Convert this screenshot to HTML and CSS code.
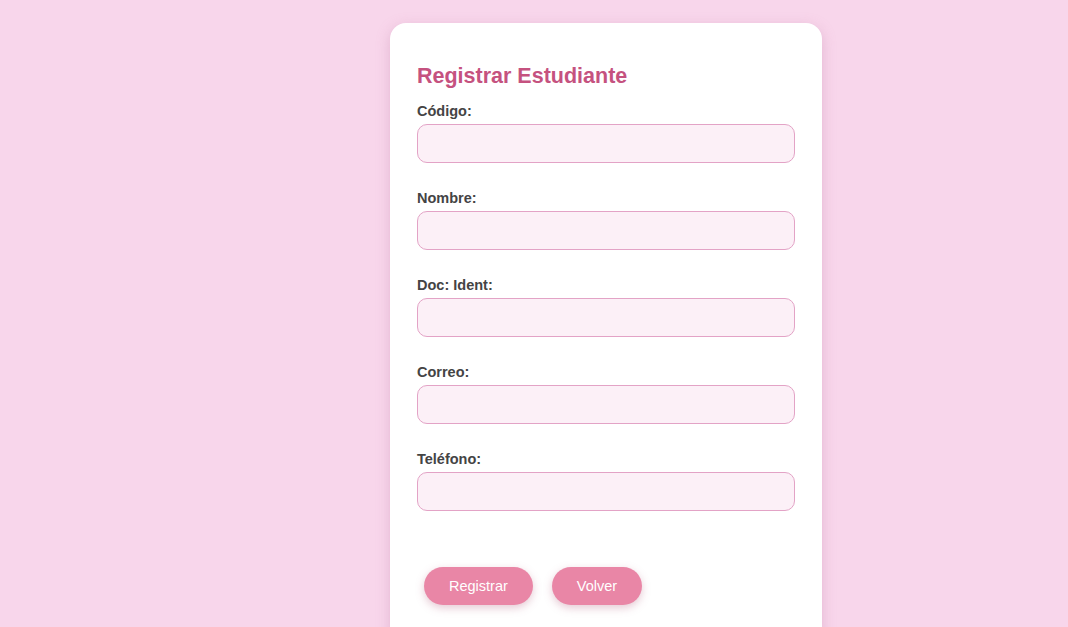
FILE: index.html
```html
<!DOCTYPE html>
<html lang="es">
<head>
<meta charset="utf-8">
<title>Registrar Estudiante</title>
<link rel="stylesheet" href="styles.css">
</head>
<body>
<div class="card">
  <h2 class="title">Registrar Estudiante</h2>
  <form class="form">
    <div class="field">
      <label class="label">Código:</label>
      <input class="input" type="text">
    </div>
    <div class="field">
      <label class="label">Nombre:</label>
      <input class="input" type="text">
    </div>
    <div class="field">
      <label class="label">Doc: Ident:</label>
      <input class="input" type="text">
    </div>
    <div class="field">
      <label class="label">Correo:</label>
      <input class="input" type="text">
    </div>
    <div class="field">
      <label class="label">Teléfono:</label>
      <input class="input" type="text">
    </div>
    <div class="actions">
      <button class="btn" type="button">Registrar</button>
      <button class="btn" type="button">Volver</button>
    </div>
  </form>
</div>
</body>
</html>
```
FILE: styles.css
```css
html, body {
  margin: 0;
  padding: 0;
}
body {
  background: #f8d6eb;
  font-family: "Liberation Sans", Arial, sans-serif;
  padding: 23px 0 0 390px;
  height: 627px;
  box-sizing: border-box;
  overflow: hidden;
}
.card {
  width: 432px;
  box-sizing: border-box;
  background: #ffffff;
  border-radius: 16px;
  padding: 41px 27px 40px;
  box-shadow: 0 4px 14px rgba(190, 120, 160, 0.35);
}
.title {
  margin: 0 0 14px;
  font-size: 21.5px;
  font-weight: bold;
  color: #c5527f;
  line-height: 25px;
}
.form {
  display: flex;
  flex-direction: column;
  gap: 27px;
  margin: 0;
}
.field {
  display: flex;
  flex-direction: column;
  gap: 4px;
}
.label {
  font-size: 14.5px;
  font-weight: bold;
  color: #444444;
  line-height: 17px;
}
.input {
  height: 39px;
  box-sizing: border-box;
  border: 1px solid #e3a3c6;
  border-radius: 10px;
  background: #fcf0f7;
  margin: 0;
  padding: 0 10px;
  font: inherit;
}
.actions {
  display: flex;
  gap: 19px;
  padding-left: 7px;
  margin-top: 29px;
}
.btn {
  height: 38px;
  padding: 0 25px;
  border: none;
  border-radius: 19px;
  background: #e986a6;
  color: #ffffff;
  font-family: "Liberation Sans", Arial, sans-serif;
  font-size: 14.5px;
  box-shadow: 0 3px 8px rgba(180, 100, 130, 0.35);
}
```
